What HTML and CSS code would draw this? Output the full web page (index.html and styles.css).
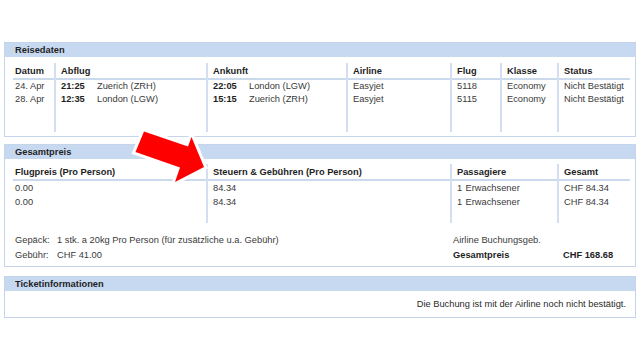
FILE: index.html
```html
<!DOCTYPE html>
<html lang="de">
<head>
<meta charset="utf-8">
<title>Buchung</title>
<link rel="stylesheet" href="styles.css">
</head>
<body>
<div class="page">
  <section class="panel panel-reise">
    <div class="panel-head">Reisedaten</div>
    <div class="grid g-reise">
      <div class="col c-first">
        <div class="th">Datum</div>
        <div class="td">24. Apr</div>
        <div class="td">28. Apr</div>
      </div>
      <div class="col">
        <div class="th">Abflug</div>
        <div class="td"><b class="time">21:25</b>Zuerich (ZRH)</div>
        <div class="td"><b class="time">12:35</b>London (LGW)</div>
      </div>
      <div class="col">
        <div class="th">Ankunft</div>
        <div class="td"><b class="time">22:05</b>London (LGW)</div>
        <div class="td"><b class="time">15:15</b>Zuerich (ZRH)</div>
      </div>
      <div class="col">
        <div class="th">Airline</div>
        <div class="td">Easyjet</div>
        <div class="td">Easyjet</div>
      </div>
      <div class="col">
        <div class="th">Flug</div>
        <div class="td">5118</div>
        <div class="td">5115</div>
      </div>
      <div class="col">
        <div class="th">Klasse</div>
        <div class="td">Economy</div>
        <div class="td">Economy</div>
      </div>
      <div class="col">
        <div class="th">Status</div>
        <div class="td">Nicht Bestätigt</div>
        <div class="td">Nicht Bestätigt</div>
      </div>
    </div>
  </section>

  <section class="panel panel-preis">
    <div class="panel-head">Gesamtpreis</div>
    <div class="grid g-preis">
      <div class="col c-first">
        <div class="th">Flugpreis (Pro Person)</div>
        <div class="td">0.00</div>
        <div class="td">0.00</div>
      </div>
      <div class="col">
        <div class="th">Steuern &amp; Gebühren (Pro Person)</div>
        <div class="td">84.34</div>
        <div class="td">84.34</div>
      </div>
      <div class="col">
        <div class="th">Passagiere</div>
        <div class="td"><span class="count">1</span>Erwachsener</div>
        <div class="td"><span class="count">1</span>Erwachsener</div>
      </div>
      <div class="col">
        <div class="th">Gesamt</div>
        <div class="td">CHF 84.34</div>
        <div class="td">CHF 84.34</div>
      </div>
    </div>
    <div class="summary">
      <div class="s-left"><span class="lbl">Gepäck:</span>1 stk. a 20kg Pro Person (für zusätzliche u.a. Gebühr)</div>
      <div class="s-mid">Airline Buchungsgeb.</div>
      <div class="s-right"></div>
      <div class="s-left"><span class="lbl">Gebühr:</span>CHF 41.00</div>
      <div class="s-mid strong">Gesamtpreis</div>
      <div class="s-right strong">CHF 168.68</div>
    </div>
  </section>

  <section class="panel panel-ticket">
    <div class="panel-head">Ticketinformationen</div>
    <div class="ticket-body">Die Buchung ist mit der Airline noch nicht bestätigt.</div>
  </section>

  <svg class="arrow" width="90" height="70" viewBox="125 122 90 70" aria-hidden="true">
    <polygon points="144,131.5 188,146.5 191.5,137 204,167 175,182 180,167.5 135.5,152" fill="#ff0000" stroke="#ffffff" stroke-width="6" stroke-linejoin="miter" paint-order="stroke"/>
  </svg>
</div>
</body>
</html>
```

FILE: styles.css
```css
* {
  box-sizing: border-box;
}

html, body {
  margin: 0;
  padding: 0;
  background: #ffffff;
}

body {
  font-family: "Liberation Sans", Arial, sans-serif;
  font-size: 9.3px;
  color: #3a3a3a;
}

.page {
  position: relative;
  width: 640px;
  height: 360px;
  padding: 42px 4px 0 4px;
}

.panel {
  border: 1px solid #c4d4ea;
  background: #ffffff;
}

.panel-reise {
  margin-bottom: 7px;
  padding-bottom: 4px;
}

.panel-preis {
  margin-bottom: 9px;
  padding-bottom: 3px;
}

.panel-head {
  height: 14px;
  line-height: 14px;
  padding-left: 10px;
  background: #c6d9f1;
  font-weight: bold;
  color: #1e1e1e;
}

.grid {
  display: grid;
  margin: 5px 5px 0 8px;
}

.g-reise {
  grid-template-columns: 41px 152px 140px 104px 50px 57px 73px;
  margin-top: 6px;
}

.g-preis {
  grid-template-columns: 193px 244px 107px 73px;
}

.col {
  border-left: 2px solid #d3dff0;
}

.col.c-first {
  border-left: none;
}

.g-reise .col {
  height: 69px;
}

.g-preis .col {
  height: 59px;
}

.th {
  height: 17px;
  padding: 2px 0 0 5px;
  line-height: 13px;
  border-bottom: 2px solid #cbd9ed;
  font-weight: bold;
  color: #1e1e1e;
  white-space: nowrap;
}

.td {
  padding-left: 5px;
  white-space: nowrap;
}

.g-reise .td {
  line-height: 13px;
}

.g-preis .td {
  line-height: 14px;
}

.c-first .th,
.c-first .td {
  padding-left: 2px;
}

.time {
  display: inline-block;
  width: 36px;
  color: #1e1e1e;
}

.count {
  display: inline-block;
  width: 8.5px;
}

.summary {
  display: grid;
  grid-template-columns: 437px 107px 73px;
  grid-auto-rows: 15px;
  margin: 10px 5px 0 8px;
  line-height: 15px;
}

.s-left {
  padding-left: 2px;
  white-space: nowrap;
}

.s-mid {
  padding-left: 3px;
  white-space: nowrap;
}

.s-right {
  padding-left: 6px;
  white-space: nowrap;
}

.strong {
  font-weight: bold;
  color: #1e1e1e;
}

.lbl {
  display: inline-block;
  width: 42px;
}

.ticket-body {
  padding: 6px 9px 6px 10px;
  line-height: 14px;
  text-align: right;
  color: #2a2a2a;
}

.arrow {
  position: absolute;
  left: 125px;
  top: 122px;
  overflow: visible;
}
```
